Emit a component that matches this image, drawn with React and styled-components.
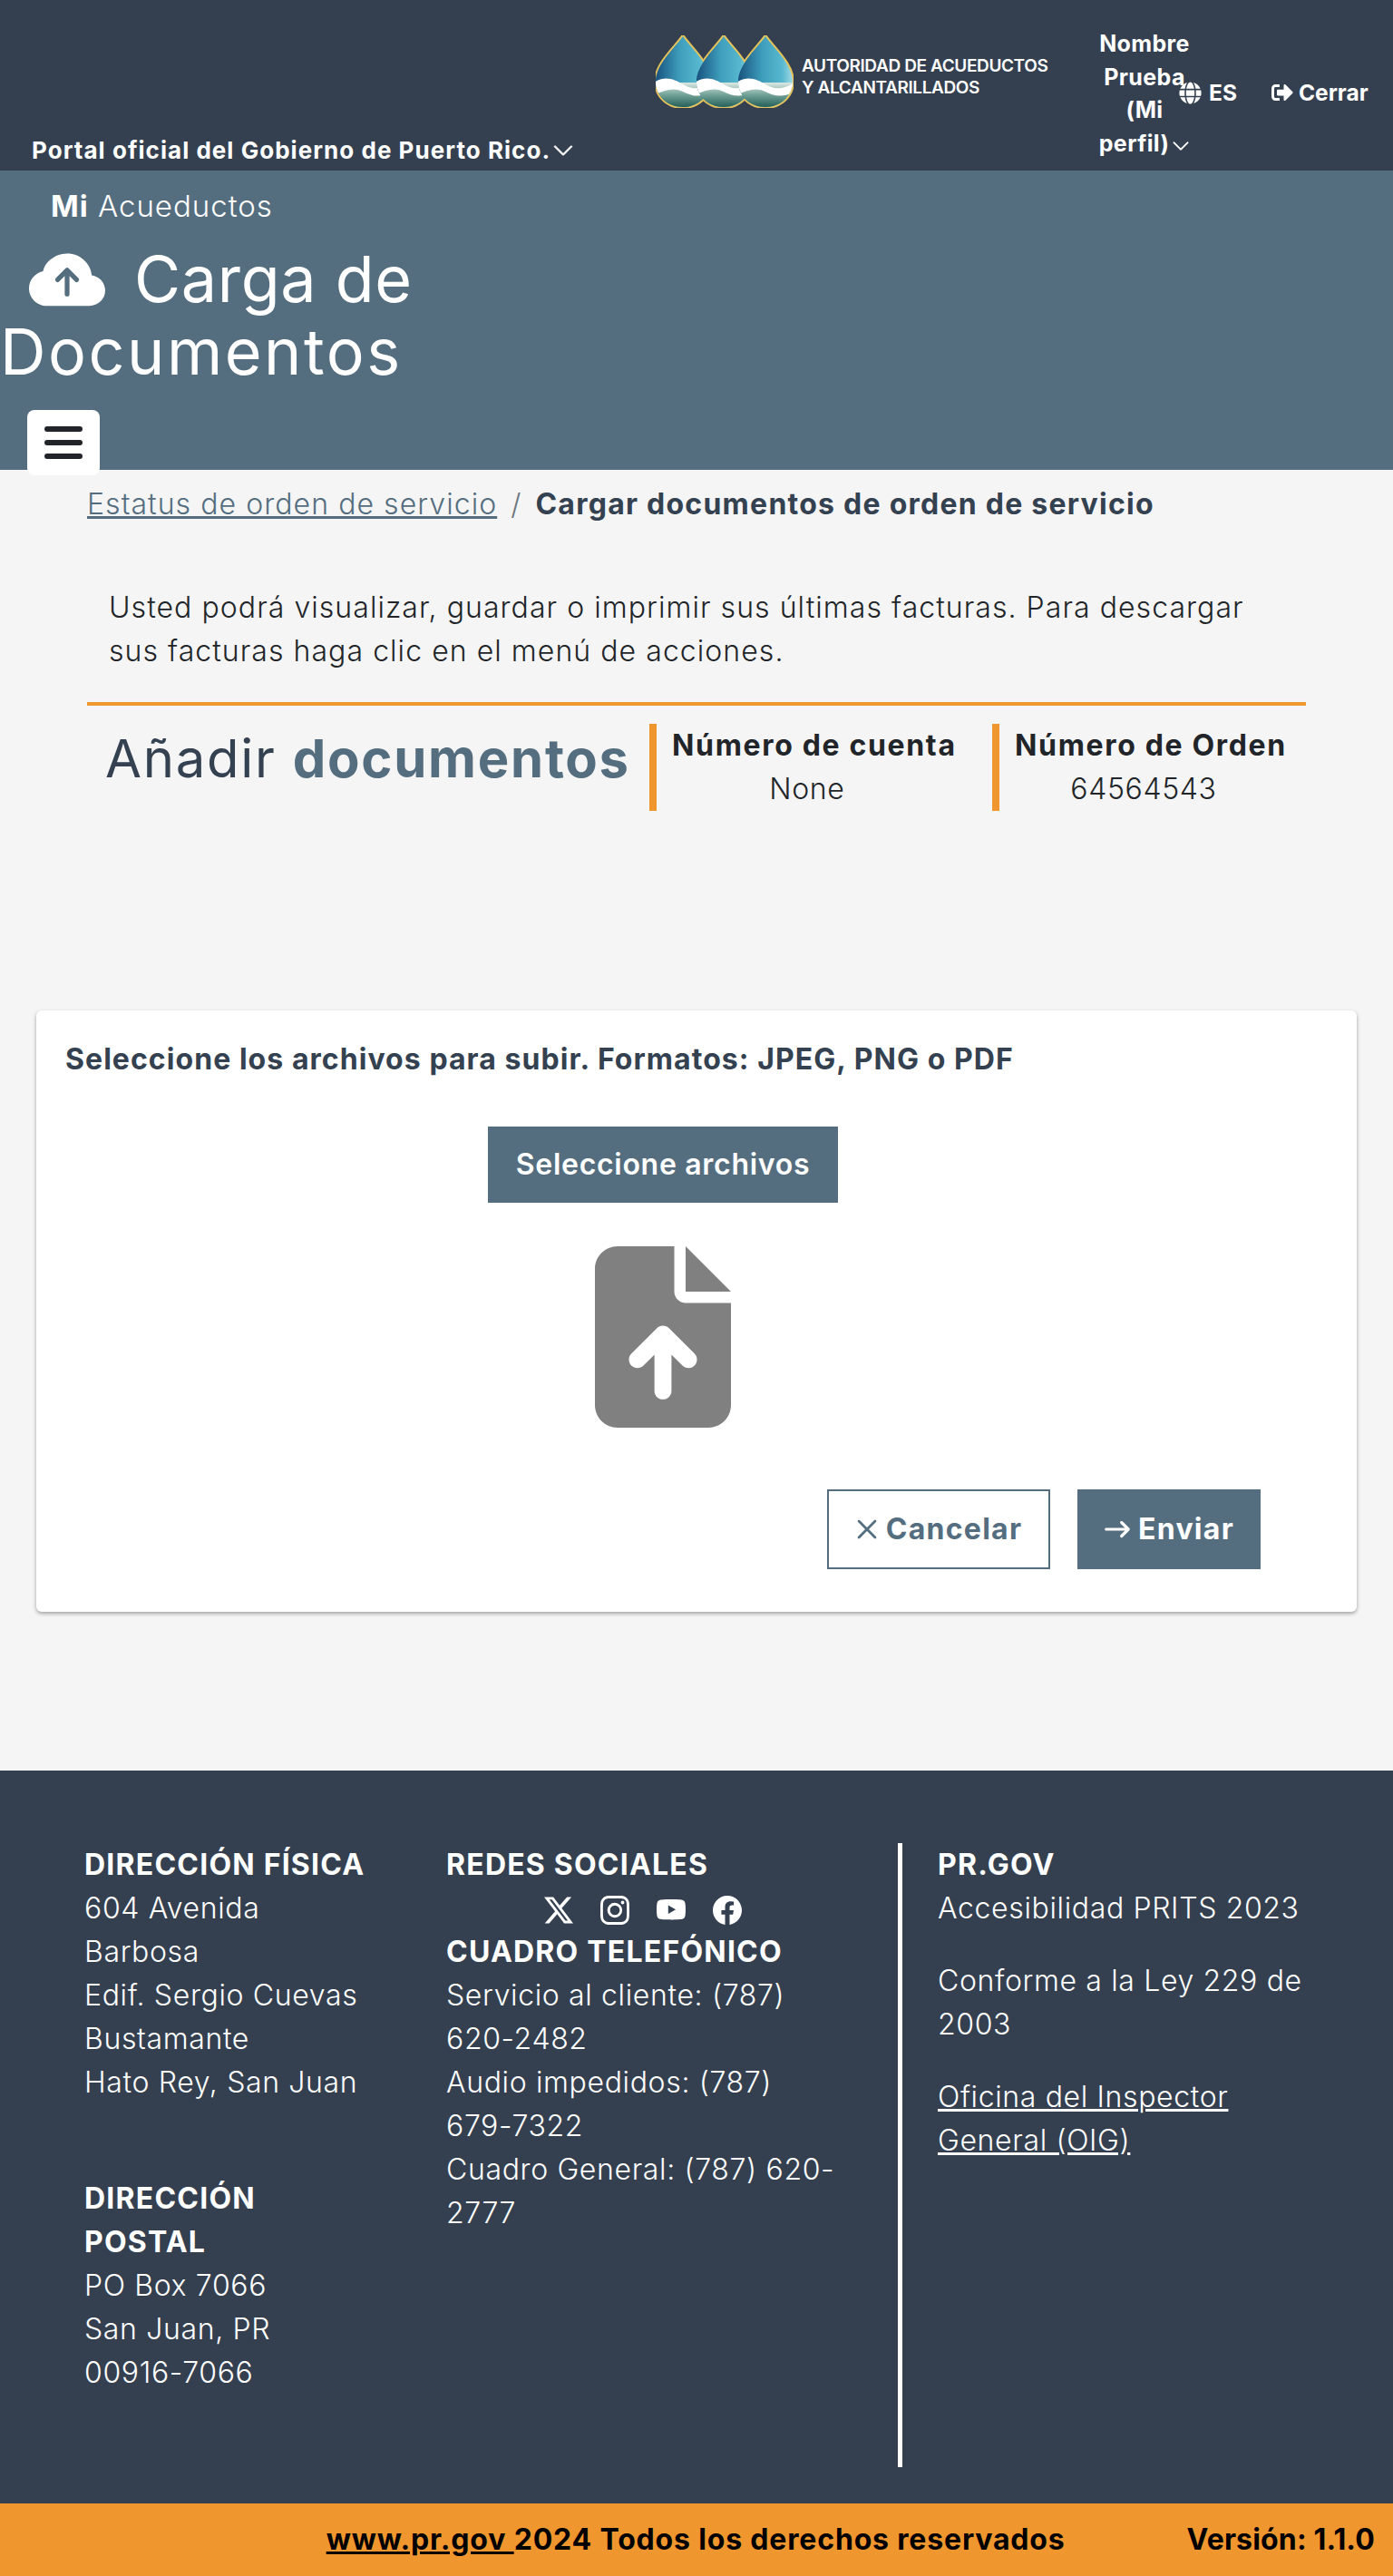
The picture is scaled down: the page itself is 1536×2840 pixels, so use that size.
import React from "react";
import styled, { createGlobalStyle } from "styled-components";
import { BsCloudArrowUpFill, BsTwitterX, BsInstagram, BsYoutube, BsFacebook, BsChevronDown, BsXLg, BsArrowRight } from "react-icons/bs";
import { FaGlobe, FaSignOutAlt } from "react-icons/fa";
import { FaFileArrowUp } from "react-icons/fa6";

const dark = "#344050";
const slate = "#546E80";
const orange = "#F0962E";

const Global = createGlobalStyle`
  * { box-sizing: border-box; }
  html, body { margin: 0; padding: 0; }
  body {
    background: #F5F5F5;
    color: #212529;
    font-family: Inter, "Liberation Sans", sans-serif;
    font-size: 32px;
    line-height: 48px;
    letter-spacing: 0.033em;
  }
  p { margin: 0; }
`;

const Page = styled.div`
  width: 1536px;
  height: 2840px;
  overflow: hidden;
`;

const TopBar = styled.header`
  height: 188px;
  background: ${dark};
  color: #fff;
  display: flex;
`;

const PortalNote = styled.div`
  width: 723px;
  padding: 0 0 0 35px;
  align-self: flex-end;
  display: flex;
  align-items: center;
  gap: 2px;
  font-size: 26px;
  font-weight: 700;
  line-height: 44px;
  letter-spacing: 0.04em;
  white-space: nowrap;
`;

const Chevron = styled(BsChevronDown)`
  width: 24px;
  height: 24px;
  stroke: currentColor;
  stroke-width: 0.6px;
  flex: none;
`;

const LogoWrap = styled.div`
  width: 487px;
  padding-top: 39px;
  display: flex;
  gap: 9px;
`;

const LogoText = styled.div`
  margin-top: 22px;
  font-size: 19px;
  font-weight: 600;
  line-height: 24px;
  letter-spacing: -0.02em;
  white-space: nowrap;
`;

const UserMenu = styled.div`
  width: 104px;
  padding-top: 30px;
  text-align: center;
  font-size: 25px;
  font-weight: 700;
  line-height: 36.5px;
  letter-spacing: 0.015em;
`;

const SmallChevron = styled(BsChevronDown)`
  width: 20px;
  height: 20px;
  margin-left: 3px;
  vertical-align: -4px;
  stroke: currentColor;
  stroke-width: 0.6px;
`;

const TopLink = styled.div`
  display: flex;
  align-items: center;
  gap: ${props => props.$gap || "8px"};
  margin-left: ${props => props.$left || "0"};
  height: 36px;
  margin-top: 84px;
  font-size: 24.5px;
  font-weight: 700;
  letter-spacing: 0;
  white-space: nowrap;
`;

const Band = styled.section`
  height: 330px;
  background: ${slate};
  color: #fff;
  padding-top: 15px;
`;

const BrandLine = styled.div`
  padding-left: 56px;
  font-size: 33px;
  font-weight: 300;
  letter-spacing: 0.03em;
  strong { font-weight: 700; }
`;

const PageTitle = styled.h1`
  width: 480px;
  margin: 17px 0 24px;
  font-size: 70px;
  font-weight: 400;
  line-height: 80px;
  letter-spacing: 0.036em;
`;

const TitleFirst = styled.span`
  letter-spacing: 0.01em;
`;

const CloudIcon = styled(BsCloudArrowUpFill)`
  width: 84px;
  height: 84px;
  margin: -12px 32px -12px 32px;
  vertical-align: -8px;
`;

const MenuButton = styled.button`
  display: flex;
  flex-direction: column;
  justify-content: center;
  align-items: center;
  gap: 9px;
  width: 80px;
  height: 72px;
  margin-left: 30px;
  position: relative;
  border: 0;
  border-radius: 8px;
  background: #fff;
  span {
    display: block;
    width: 42px;
    height: 6px;
    border-radius: 3px;
    background: #212529;
  }
`;

const Crumbs = styled.nav`
  display: flex;
  padding: 14px 0 0 96px;
  a { color: ${slate}; text-decoration: underline; font-weight: 300; }
  i { font-style: normal; font-weight: 300; margin: 0 15px; color: #6c757d; }
  strong { color: #344150; font-weight: 700; letter-spacing: 0.039em; white-space: nowrap; }
`;

const Intro = styled.p`
  width: 1290px;
  margin: 66px 0 0 120px;
  font-weight: 300;
`;

const Divider = styled.hr`
  width: 1344px;
  height: 4px;
  margin: 32px 0 20px 96px;
  border: 0;
  background: ${orange};
`;

const HeadingRow = styled.div`
  display: flex;
  height: 96px;
  margin-left: 116px;
`;

const AddTitle = styled.h2`
  width: 600px;
  margin: 0;
  font-size: 58px;
  font-weight: 400;
  line-height: 76px;
  letter-spacing: 0.03em;
  color: #344150;
  white-space: nowrap;
  strong { font-weight: 700; color: ${slate}; }
`;

const InfoCell = styled.div`
  width: ${props => props.$width};
  border-left: 8px solid ${orange};
  padding-left: 17px;
  font-weight: 300;
  white-space: nowrap;
`;

const InfoInner = styled.div`
  display: inline-block;
  text-align: center;
  letter-spacing: 0.02em;
  strong { display: block; font-weight: 700; letter-spacing: 0.052em; }
`;

const InfoValue = styled.span`
  display: block;
  padding-right: 16px;
`;

const Card = styled.section`
  width: 1456px;
  height: 663px;
  margin: 220px 0 0 40px;
  padding: 30px 106px 47px 32px;
  background: #fff;
  border-radius: 6px;
  box-shadow: 0 2px 4px rgba(0, 0, 0, 0.35);
  display: flex;
  flex-direction: column;
  align-items: center;
`;

const CardTitle = styled.p`
  align-self: flex-start;
  font-weight: 700;
  white-space: nowrap;
  color: #344150;
`;

const PrimaryButton = styled.button`
  display: flex;
  align-items: center;
  justify-content: center;
  gap: 8px;
  width: ${props => props.$width};
  height: ${props => props.$height};
  background: ${slate};
  border: 0;
  color: #fff;
  font: inherit;
  letter-spacing: 0.04em;
  font-weight: 600;
`;

const SelectButton = styled(PrimaryButton)`
  margin-top: 50px;
  letter-spacing: 0.022em;
`;

const FileIcon = styled(FaFileArrowUp)`
  width: 150px;
  height: 200px;
  margin-top: 48px;
  color: #808080;
`;

const CardActions = styled.div`
  align-self: flex-end;
  display: flex;
  gap: 30px;
  margin-top: 68px;
`;

const GhostButton = styled(PrimaryButton)`
  background: #fff;
  border: 2px solid ${slate};
  color: ${slate};
  font-weight: 700;
  svg { stroke: currentColor; stroke-width: 0.7px; }
`;

const SolidAction = styled(PrimaryButton)`
  font-weight: 700;
  svg { stroke: currentColor; stroke-width: 0.7px; }
`;

const Footer = styled.footer`
  display: grid;
  grid-template-columns: 399px 498px 1fr;
  height: 808px;
  margin-top: 175px;
  padding: 80px 0 40px 93px;
  background: ${dark};
  color: #fff;
  font-weight: 300;
  letter-spacing: 0.02em;
`;

const FootHead = styled.h3`
  margin: ${props => props.$top || "0"} 0 0;
  font-size: 32px;
  font-weight: 700;
  line-height: 48px;
  letter-spacing: 0.038em;
`;

const PhoneCol = styled.div`
  width: 434px;
`;

const Socials = styled.div`
  display: flex;
  justify-content: center;
  gap: 30px;
  height: 50px;
  padding-top: 10px;
  margin-bottom: -2px;
  svg { width: 32px; height: 32px; }
`;

const LegalCol = styled.div`
  border-left: 5px solid #fff;
  padding-left: 39px;
  width: 460px;
  a { color: #fff; text-decoration: underline; }
`;

const LegalText = styled.p`
  margin-top: ${props => props.$top || "32px"};
`;

const BottomBar = styled.div`
  height: 80px;
  background: ${orange};
  color: #000;
  display: flex;
  align-items: center;
  justify-content: flex-end;
  gap: 134px;
  padding-right: 20px;
  font-weight: 700;
  letter-spacing: 0.026em;
  white-space: pre;
  a { color: #000; text-decoration: underline; }
`;

const VersionTag = styled.span`
  letter-spacing: 0.005em;
`;

const dropCenters = [30, 75, 121];

function dropPath(cx) {
  return `M${cx} 1 C${cx + 7} 12 ${cx + 31} 32 ${cx + 30} 52 C${cx + 29} 68 ${cx + 16} 79 ${cx} 79 C${cx - 16} 79 ${cx - 29} 68 ${cx - 30} 52 C${cx - 31} 32 ${cx - 7} 12 ${cx} 1 Z`;
}

function Logo() {
  return (
    <svg width="152" height="80" viewBox="0 0 152 80" aria-hidden="true">
      <defs>
        <linearGradient id="waterFill" x1="0" x2="1" y1="0" y2="0">
          <stop offset="0" stopColor="#17507c" />
          <stop offset="0.45" stopColor="#3f9fbd" />
          <stop offset="0.8" stopColor="#57b8cf" />
          <stop offset="1" stopColor="#a9dce6" />
        </linearGradient>
        <linearGradient id="lowFill" x1="0" x2="0" y1="0" y2="1">
          <stop offset="0" stopColor="#dce9e5" />
          <stop offset="0.5" stopColor="#6fa095" />
          <stop offset="1" stopColor="#1f5a55" />
        </linearGradient>
        {dropCenters.map(cx => (
          <clipPath id={`drop${cx}`} key={cx}>
            <path d={dropPath(cx)} />
          </clipPath>
        ))}
      </defs>
      {dropCenters.map(cx => (
        <path key={cx} d={dropPath(cx)} fill="none" stroke="#e6c35a" strokeWidth="4" />
      ))}
      {dropCenters.map(cx => (
        <g key={cx} clipPath={`url(#drop${cx})`}>
          <rect x={cx - 31} y="0" width="62" height="80" fill="url(#waterFill)" />
          <rect x={cx - 31} y="52" width="62" height="28" fill="url(#lowFill)" />
          <path
            d={`M${cx - 32} 52 C${cx - 20} 44 ${cx - 10} 48 ${cx} 54 C${cx + 10} 60 ${cx + 20} 60 ${cx + 32} 52 L${cx + 32} 62 C${cx + 18} 70 ${cx + 8} 66 ${cx} 62 C${cx - 10} 57 ${cx - 20} 60 ${cx - 32} 66 Z`}
            fill="#fff"
          />
        </g>
      ))}
    </svg>
  );
}

export default function App() {
  return (
    <Page>
      <Global />
      <TopBar>
        <PortalNote>
          Portal oficial del Gobierno de Puerto Rico.
          <Chevron />
        </PortalNote>
        <LogoWrap>
          <Logo />
          <LogoText>
            AUTORIDAD DE ACUEDUCTOS
            <br />
            Y ALCANTARILLADOS
          </LogoText>
        </LogoWrap>
        <UserMenu>
          Nombre Prueba (Mi perfil)
          <SmallChevron />
        </UserMenu>
        <TopLink $left="-14px">
          <FaGlobe size={25} />
          ES
        </TopLink>
        <TopLink $left="38px" $gap="6px">
          <FaSignOutAlt size={24} />
          Cerrar
        </TopLink>
      </TopBar>

      <Band>
        <BrandLine>
          <strong>Mi</strong> Acueductos
        </BrandLine>
        <PageTitle>
          <CloudIcon />
          <TitleFirst>Carga de</TitleFirst> Documentos
        </PageTitle>
        <MenuButton aria-label="Menú">
          <span />
          <span />
          <span />
        </MenuButton>
      </Band>

      <Crumbs>
        <a href="#estatus">Estatus de orden de servicio</a>
        <i>/</i>
        <strong>Cargar documentos de orden de servicio</strong>
      </Crumbs>

      <Intro>
        Usted podrá visualizar, guardar o imprimir sus últimas facturas. Para descargar sus facturas haga clic en el
        menú de acciones.
      </Intro>

      <Divider />

      <HeadingRow>
        <AddTitle>
          Añadir <strong>documentos</strong>
        </AddTitle>
        <InfoCell $width="378px">
          <InfoInner>
            <strong>Número de cuenta</strong>
            <InfoValue>None</InfoValue>
          </InfoInner>
        </InfoCell>
        <InfoCell $width="330px">
          <InfoInner>
            <strong>Número de Orden</strong>
            <InfoValue>64564543</InfoValue>
          </InfoInner>
        </InfoCell>
      </HeadingRow>

      <Card>
        <CardTitle>Seleccione los archivos para subir. Formatos: JPEG, PNG o PDF</CardTitle>
        <SelectButton $width="386px" $height="84px">
          Seleccione archivos
        </SelectButton>
        <FileIcon />
        <CardActions>
          <GhostButton $width="246px" $height="88px">
            <BsXLg size={26} />
            Cancelar
          </GhostButton>
          <SolidAction $width="202px" $height="88px">
            <BsArrowRight size={30} />
            Enviar
          </SolidAction>
        </CardActions>
      </Card>

      <Footer>
        <div>
          <FootHead>DIRECCIÓN FÍSICA</FootHead>
          604 Avenida
          <br />
          Barbosa
          <br />
          Edif. Sergio Cuevas
          <br />
          Bustamante
          <br />
          Hato Rey, San Juan
          <FootHead $top="80px">
            DIRECCIÓN
            <br />
            POSTAL
          </FootHead>
          PO Box 7066
          <br />
          San Juan, PR
          <br />
          00916-7066
        </div>
        <PhoneCol>
          <FootHead>REDES SOCIALES</FootHead>
          <Socials>
            <BsTwitterX />
            <BsInstagram />
            <BsYoutube />
            <BsFacebook />
          </Socials>
          <FootHead>CUADRO TELEFÓNICO</FootHead>
          Servicio al cliente: (787) 620-2482
          <br />
          Audio impedidos: (787) 679-7322
          <br />
          Cuadro General: (787) 620-2777
        </PhoneCol>
        <LegalCol>
          <FootHead>PR.GOV</FootHead>
          <LegalText $top="0">Accesibilidad PRITS 2023</LegalText>
          <LegalText>Conforme a la Ley 229 de 2003</LegalText>
          <LegalText>
            <a href="#oig">Oficina del Inspector General (OIG)</a>
          </LegalText>
        </LegalCol>
      </Footer>

      <BottomBar>
        <span>
          <a href="#prgov">www.pr.gov </a>2024 Todos los derechos reservados
        </span>
        <VersionTag>Versión: 1.1.0</VersionTag>
      </BottomBar>
    </Page>
  );
}
